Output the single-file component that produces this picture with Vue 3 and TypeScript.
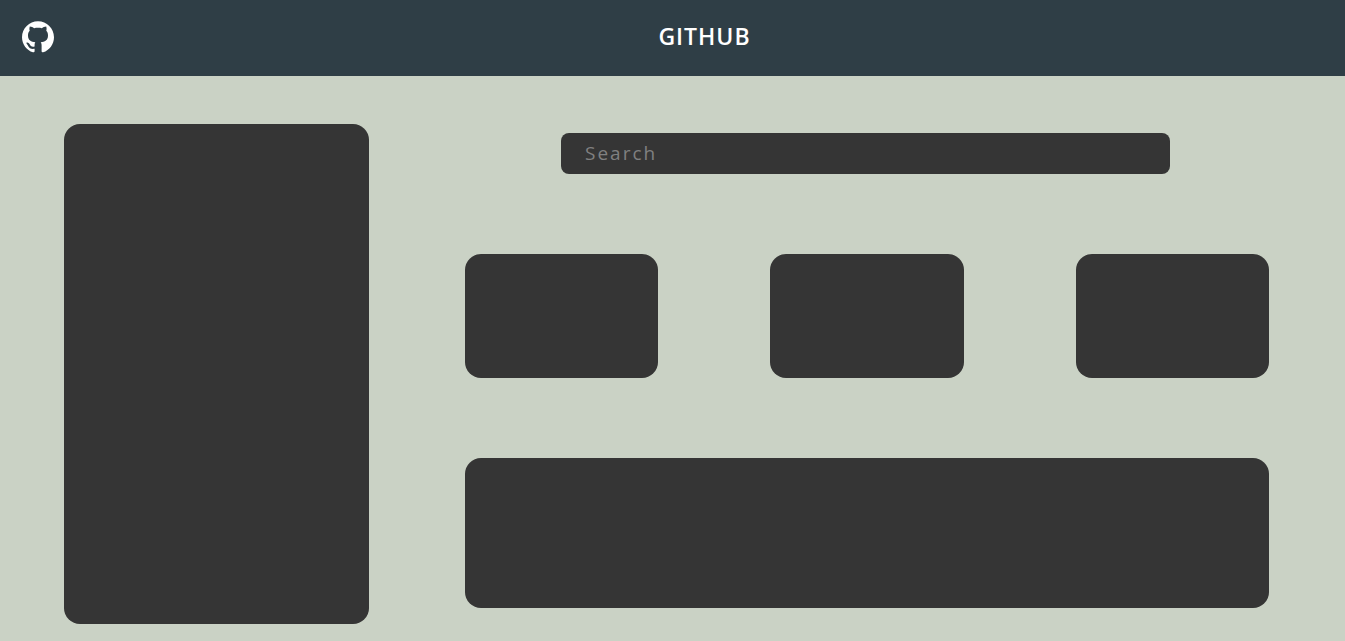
<script setup lang="ts">
import { ref } from 'vue'

const query = ref<string>('')
const cards: number[] = [1, 2, 3]
</script>

<template>
  <div class="page">
    <header class="bar">
      <a class="logo" href="#" aria-label="GitHub">
        <svg viewBox="0 0 32 32" width="32" height="32" aria-hidden="true">
          <path
            fill="currentColor"
            d="M16 0.300C7.200 0.300 0 7.400 0 16.200c0 7 4.600 13 10.900 15.100.8.100 1.700-.2 1.700-1v-2.500c-3.600.5-5.400-.6-6.300-2.500-.4-.9-.9-1.900-1.600-2.600-.5-.6-.3-1.300.5-1.200 1.300.1 2.200 1.300 2.900 2.500 1 1.700 2.600 1.900 4.500 1.400v-1.800c0-1.100.3-1.900.7-2.400-4.100-.3-7.300-2-7.300-6.800 0-2 .5-3.500 1.700-4.700-.4-1.300-.4-2.600.1-4.200 1.700 0 3 .8 4.300 1.700 2.300-.5 5.500-.5 7.800 0 1.300-.9 2.600-1.700 4.300-1.700.5 1.600.5 2.900.1 4.200 1.200 1.200 1.700 2.700 1.700 4.700 0 4.800-3.200 6.500-7.300 6.800.5.700.9 1.600.9 3v6.100c0 .8.800 1.100 1.600 1C27.400 29.200 32 23.200 32 16.200 32 7.400 24.800.3 16 .3z"
          />
        </svg>
      </a>
      <h1 class="title">GITHUB</h1>
    </header>
    <main class="body">
      <aside class="profile"></aside>
      <div class="content">
        <input v-model="query" class="search" type="text" placeholder="Search" aria-label="Search" />
        <div class="cards">
          <section v-for="card in cards" :key="card" class="card"></section>
        </div>
        <section class="panel"></section>
      </div>
    </main>
  </div>
</template>

<style>
body {
  margin: 0;
  background: #cad2c5;
}
</style>

<style scoped>
.page {
  min-height: 100vh;
  box-sizing: border-box;
  overflow: hidden;
  background: #cad2c5;
  font-family: "Open Sans", "Noto Sans", sans-serif;
}
.bar {
  display: flex;
  align-items: center;
  height: 76px;
  box-sizing: border-box;
  padding: 0 22px 2px;
  background: #2f3e46;
  color: #fff;
}
.logo {
  display: flex;
  color: inherit;
}
.title {
  flex: 1;
  margin: 0;
  padding: 0 0 2px 32px;
  text-align: center;
  font-size: 23px;
  line-height: 32px;
  font-weight: 650;
  letter-spacing: 1px;
}
.body {
  display: grid;
  grid-template-columns: 305fr 804fr;
  column-gap: 96px;
  padding: 48px 76px 16px 64px;
}
.profile,
.card,
.panel {
  border-radius: 16px;
  background: #353535;
}
.profile {
  min-height: 500px;
}
.content {
  display: flex;
  flex-direction: column;
  gap: 80px;
  padding: 9px 0 16px;
}
.search {
  width: calc(100% - 195px);
  height: 41px;
  box-sizing: border-box;
  margin-left: 96px;
  padding: 0 24px 2px;
  border: 0;
  border-radius: 8px;
  outline: 0;
  background: #353535;
  color: #fff;
  font-family: inherit;
  font-size: 19px;
  letter-spacing: 2px;
}
.search::placeholder {
  color: #808080;
}
.cards {
  display: grid;
  grid-template-columns: repeat(3, 1fr);
  gap: 112px;
}
.card {
  height: 124px;
}
.panel {
  height: 150px;
}
</style>
